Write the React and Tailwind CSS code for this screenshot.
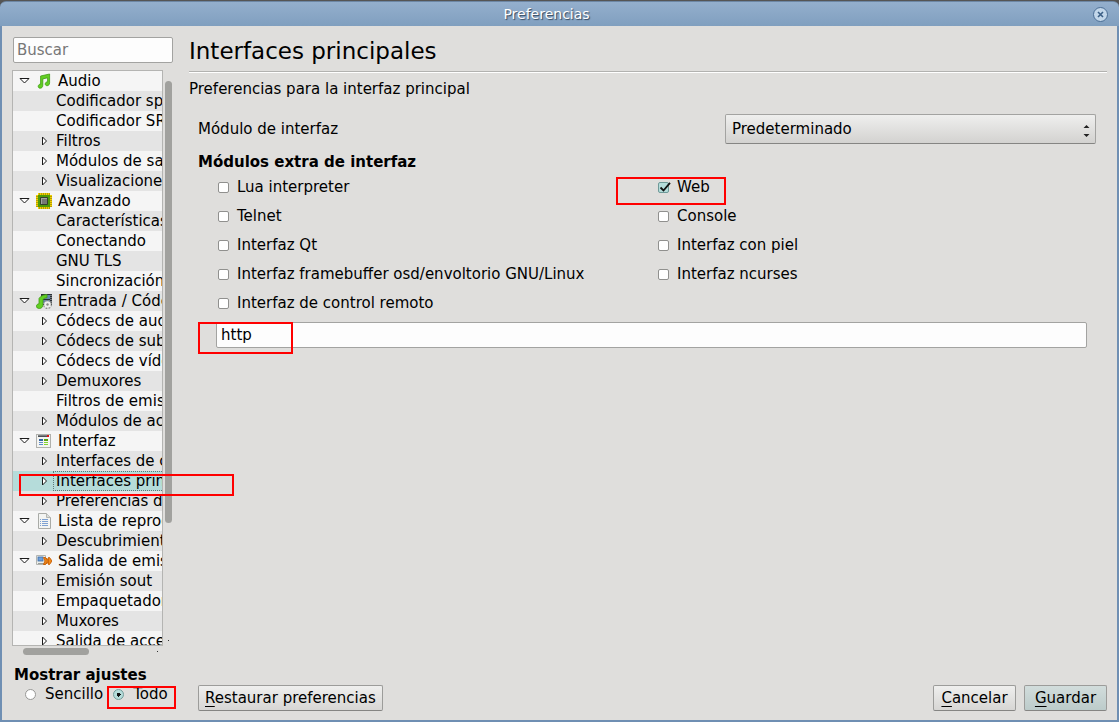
import React, { useState } from "react";

const TREE = [
  { label: "Audio", icon: "audio" },
  { label: "Codificador speex", leaf: true },
  { label: "Codificador SRT", leaf: true },
  { label: "Filtros" },
  { label: "Módulos de salida" },
  { label: "Visualizaciones" },
  { label: "Avanzado", icon: "chip" },
  { label: "Características", leaf: true },
  { label: "Conectando", leaf: true },
  { label: "GNU TLS", leaf: true },
  { label: "Sincronización", leaf: true },
  { label: "Entrada / Códecs", icon: "codecs" },
  { label: "Códecs de audio" },
  { label: "Códecs de subtítulos" },
  { label: "Códecs de vídeo" },
  { label: "Demuxores" },
  { label: "Filtros de emisión", leaf: true },
  { label: "Módulos de acceso" },
  { label: "Interfaz", icon: "window" },
  { label: "Interfaces de control" },
  { label: "Interfaces principales", selected: true },
  { label: "Preferencias de" },
  { label: "Lista de reproducción", icon: "list" },
  { label: "Descubrimiento" },
  { label: "Salida de emisión", icon: "stream" },
  { label: "Emisión sout" },
  { label: "Empaquetadores" },
  { label: "Muxores" },
  { label: "Salida de acceso" },
];

const MODULES = [
  { id: "lua", label: "Lua interpreter" },
  { id: "http", label: "Web", marked: true },
  { id: "telnet", label: "Telnet" },
  { id: "console", label: "Console" },
  { id: "qt", label: "Interfaz Qt" },
  { id: "skins", label: "Interfaz con piel" },
  { id: "fb", label: "Interfaz framebuffer osd/envoltorio GNU/Linux" },
  { id: "ncurses", label: "Interfaz ncurses" },
  { id: "rc", label: "Interfaz de control remoto" },
];

function Note() {
  return (
    <path
      d="M4.600 3 13.600 1v8.800c0 1.700-1 2.900-2.500 2.900-1.100 0-1.900-.7-1.900-1.700 0-1.200 1-2.200 2.400-2.200V4.800L6.800 5.900v6.300c0 1.800-1.100 3-2.600 3-1.200 0-2-.8-2-1.800 0-1.300 1.100-2.300 2.400-2.300z"
      fill="#62cf22"
      stroke="#3f9a14"
      strokeWidth="0.8"
    />
  );
}

function TreeIcon({ name }) {
  return (
    <svg className="h-4 w-4 shrink-0" viewBox="0 0 16 16" aria-hidden="true">
      {name === "audio" && <Note />}
      {name === "chip" && (
        <>
          <path d="M2 0h12v2h2v12h-2v2H2v-2H0V2h2z" fill="#b59a08" />
          <path
            d="M2.500 0v2M4.500 0v2M6.500 0v2M8.500 0v2M10.500 0v2M12.500 0v2M2.500 14v2M4.500 14v2M6.500 14v2M8.500 14v2M10.500 14v2M12.500 14v2M0 2.500h2M0 4.500h2M0 6.500h2M0 8.500h2M0 10.500h2M0 12.500h2M14 2.500h2M14 4.500h2M14 6.500h2M14 8.500h2M14 10.500h2M14 12.500h2"
            stroke="#f2d300"
          />
          <rect x="2" y="2" width="12" height="12" fill="#4e9a06" />
          <rect x="4" y="4" width="8" height="8" rx="1" fill="#33402c" />
          <rect x="5" y="5" width="6" height="6" fill="#a3a5a1" />
          <rect x="6" y="6" width="5" height="5" fill="#777975" />
        </>
      )}
      {name === "codecs" && (
        <>
          <rect x="5" y="1" width="11" height="11" fill="#2b3036" />
          <rect x="7" y="2" width="7" height="4" fill="#6486ab" />
          <rect x="7" y="7" width="7" height="4" fill="#6486ab" />
          <path d="M15 2v9" stroke="#c8ccd0" strokeDasharray="1 1" />
          <path
            d="M3 5.500C4.500 3 7 2 11 1.500v3.200C8.500 5 7.500 5.600 7 6.500v5c0 2.500-1.500 4-3.700 4C1.500 15.500.400 14.500.400 13.200c0-1.500 1.300-2.400 2.600-2.400z"
            fill="#62cf22"
            stroke="#3f9a14"
            strokeWidth="0.8"
          />
          <circle cx="11.500" cy="11.500" r="3.400" fill="none" stroke="#8b8d89" strokeWidth="2.200" strokeDasharray="1.600 1.070" />
          <circle cx="11.500" cy="11.500" r="3.300" fill="#eeeeec" />
          <circle cx="11.500" cy="11.500" r="1.200" fill="#888a85" />
        </>
      )}
      {name === "window" && (
        <>
          <rect x="0.500" y="1.500" width="14" height="13" fill="#f4f4f2" stroke="#b0b1ad" />
          <path d="M2 3.500h9" stroke="#4c5054" />
          <path d="M2 2.500h9" stroke="#7c8084" />
          <path d="M11 3h2" stroke="#e01010" strokeWidth="2" />
          <path d="M3 7h4" stroke="#3465a4" strokeWidth="2" />
          <path d="M3 9.500h4M3 11.500h4" stroke="#5c8bc8" />
          <path d="M8 7h4" stroke="#5aa50c" strokeWidth="2" />
          <path d="M8 9.500h4M8 11.500h4" stroke="#82d62c" />
        </>
      )}
      {name === "list" && (
        <>
          <path d="M2.500 0.500h8l4 4v11h-12z" fill="#f3f4f2" stroke="#a9aba7" />
          <path d="M10.500 0.500v4h4" fill="#dcdedb" stroke="#b5b7b3" />
          <path d="M4 6.500h1M4 8.500h1M4 10.500h1M4 12.500h1M6 6.500h6M6 8.500h6M6 10.500h6M6 12.500h6" stroke="#7ea1d2" />
        </>
      )}
      {name === "stream" && (
        <>
          <path d="M0.500 2.500h9v9h-9z" fill="#eceeea" stroke="#b3b5b1" />
          <rect x="2" y="4" width="5" height="4" fill="#6f9fd8" stroke="#3a6cab" strokeWidth="0.800" />
          <path d="M2 10.500h6" stroke="#9a9c98" />
          <path
            d="M7.500 4.500h2l2 2 1-2h1l2.500 3.500-2.500 3.500h-1l-1-2-2 2h-2L9 8z"
            fill="#f08a1c"
            stroke="#c45a00"
            strokeWidth="0.900"
          />
          <path d="M9.500 5.500 11.500 8l-2 2.500M12.500 5.500v5" fill="none" stroke="#c45a00" strokeWidth="0.700" />
        </>
      )}
    </svg>
  );
}

function TreeRow({ item, odd }) {
  const bg = item.selected ? "bg-[#b5dcda]" : odd ? "bg-[#e4e4e4]" : "bg-[#f5f5f5]";
  if (item.icon) {
    return (
      <li className={`flex h-5 items-center gap-1.5 pl-1.5 ${bg}`}>
        <svg className="h-[11px] w-[11px] shrink-0" viewBox="0 0 11 11" aria-hidden="true">
          <path d="M1 2.500h9L5.500 7z" fill="#fff" stroke="#1a1a1a" />
        </svg>
        <TreeIcon name={item.icon} />
        <span className="whitespace-nowrap">{item.label}</span>
      </li>
    );
  }
  return (
    <li className={`flex h-5 items-center pl-[29px] ${bg}`} aria-selected={item.selected}>
      <svg className="mr-[5px] h-[11px] w-1.5 shrink-0" viewBox="0 0 6 11" aria-hidden="true">
        {!item.leaf && <path d="M0.500 1v8L4.500 5z" fill="#fff" stroke="#1a1a1a" />}
      </svg>
      <span
        className={`h-5 flex-1 border pl-0.5 leading-[18px] whitespace-nowrap ${
          item.selected ? "border-dotted border-[#5c7a79]" : "border-transparent"
        }`}
      >
        {item.label}
      </span>
    </li>
  );
}

function Mark({ className }) {
  return <span className={`pointer-events-none absolute z-10 border-2 border-[#ff0000] ${className}`} />;
}

function Sidebar() {
  const [mode, setMode] = useState("all");
  const radio =
    "h-[11px] w-[11px] appearance-none rounded-full border border-[#989896] bg-white checked:border-[#6f9a98] checked:bg-[radial-gradient(circle,#111_0_2px,#b5dcda_2px)]";
  return (
    <aside className="flex w-[161px] shrink-0 flex-col pt-[11px]">
      <input
        type="text"
        aria-label="Buscar"
        placeholder="Buscar"
        className="ml-px h-[26px] shrink-0 rounded-xs border border-[#a3a3a1] bg-[#fdfdfd] px-[3px] outline-none placeholder:text-[#777]"
      />
      <div className="relative mt-[7px] mr-px flex min-h-0 flex-1 gap-0.5">
        <ul className="min-w-0 flex-1 overflow-hidden border border-[#b4b4b2] bg-[#f5f5f5] leading-5">
          {TREE.map((item, i) => (
            <TreeRow key={item.label} item={item} odd={i % 2 === 1} />
          ))}
        </ul>
        <div className="flex w-[7px] flex-col items-center justify-between pt-[11px] pb-[5px]">
          <div className="h-[79%] w-[7px] rounded-full bg-[#a1a19e]" />
          <i className="h-px w-px bg-[#333]" />
        </div>
        <Mark className="top-[404px] left-[7px] h-[22px] w-[215px]" />
      </div>
      <div className="mt-0.5 flex h-[7px] items-center justify-between pr-[15px] pl-[11px]">
        <div className="h-[7px] w-[66px] rounded-full bg-[#a1a19e]" />
        <i className="h-px w-px bg-[#333]" />
      </div>
      <fieldset className="mt-2.5 pb-4">
        <legend className="pl-0.5 leading-5 font-bold whitespace-nowrap">Mostrar ajustes</legend>
        <div className="flex items-center pl-[13px] leading-[19px]">
          <label className="flex items-center gap-[9px]">
            <input type="radio" name="mode" className={radio} checked={mode === "simple"} onChange={() => setMode("simple")} />
            Sencillo
          </label>
          <label className="relative ml-2.5 flex items-center gap-[9px]">
            <input type="radio" name="mode" className={radio} checked={mode === "all"} onChange={() => setMode("all")} />
            Todo
            <Mark className="top-px -left-1.5 h-[23px] w-[69px]" />
          </label>
        </div>
      </fieldset>
    </aside>
  );
}

function ModuleCheck({ module, checked, onToggle }) {
  return (
    <label className="relative flex items-center gap-2 justify-self-start leading-5">
      <span className="relative flex h-[11px] w-[11px]">
        <input
          type="checkbox"
          checked={checked}
          onChange={onToggle}
          className="h-[11px] w-[11px] appearance-none rounded-xs border border-[#90908e] bg-white checked:border-[#6f9a98] checked:bg-[#b5dcda]"
        />
        {checked && (
          <svg className="pointer-events-none absolute top-0 left-0 h-[11px] w-[13px]" viewBox="0 0 13 11" aria-hidden="true">
            <path d="M2.500 5.500 5.500 8.500 12 0.800" fill="none" stroke="#111" strokeWidth="1.800" />
          </svg>
        )}
      </span>
      {module.label}
      {module.marked && <Mark className="top-0 -left-[42px] h-7 w-[110px]" />}
    </label>
  );
}

function Button({ first, children, primary }) {
  return (
    <button
      type="button"
      className={`h-[26px] min-w-[83px] rounded-xs border border-[#9c9c9a] border-b-[#858583] bg-linear-to-b px-1.5 leading-[22px] ${
        primary ? "from-[#d2dddc] to-[#bccbca]" : "from-[#efefee] to-[#d7d6d4]"
      }`}
    >
      <span className="underline decoration-1 underline-offset-[3px]">{first}</span>
      {children}
    </button>
  );
}

export default function App() {
  const [active, setActive] = useState(["http"]);

  const toggle = (id) => {
    setActive((list) => (list.includes(id) ? list.filter((x) => x !== id) : [...list, id]));
  };

  return (
    <div className="flex h-screen flex-col bg-[#555] font-['DejaVu_Sans',sans-serif] text-[15px] text-black">
      <header className="mt-px flex h-[25px] shrink-0 items-center rounded-t-md border-t border-[#6d87a5] bg-linear-to-b from-[#94afcd] to-[#809fbf] pr-[11px]">
        <h1 className="flex-1 text-center text-[14px] leading-6 text-white [text-shadow:1px_1px_1px_#33485e]">Preferencias</h1>
        <button
          type="button"
          aria-label="Cerrar"
          className="flex h-[15px] w-[15px] items-center justify-center rounded-full border border-[#4a6d94] bg-[#c3d7ea]"
        >
          <svg className="h-[7px] w-[7px]" viewBox="0 0 7 7" aria-hidden="true">
            <path d="M1 1l5 5M6 1 1 6" stroke="#3b5f86" strokeWidth="1.600" />
          </svg>
        </button>
      </header>

      <div className="flex min-h-0 flex-1 gap-4 border-x-2 border-b-2 border-[#6f8fb3] bg-[#dfdedc] px-2.5">
        <Sidebar />

        <main className="flex min-w-0 flex-1 flex-col">
          <h2 className="mt-2 h-[37px] text-[23px] leading-[34px]">Interfaces principales</h2>
          <hr className="h-0.5 border-t border-b border-t-[#b2b2b0] border-b-white" />
          <p className="mt-1.5 leading-5">Preferencias para la interfaz principal</p>

          <div className="flex flex-1 flex-col pt-[15px] pr-[11px] pl-[9px]">
            <div className="flex items-center justify-between">
              <label htmlFor="module">Módulo de interfaz</label>
              <div className="relative w-[371px]">
                <select
                  id="module"
                  className="h-[30px] w-full appearance-none rounded-xs border border-[#a3a3a1] border-b-[#858583] bg-linear-to-b from-[#efefee] to-[#d3d2d0] px-1.5"
                >
                  <option>Predeterminado</option>
                </select>
                <svg className="pointer-events-none absolute right-1.5 bottom-[7px] h-3 w-[7px]" viewBox="0 0 7 12" aria-hidden="true">
                  <path d="M0.500 3 3.500 0l3 3zM0.500 9l3 3 3-3z" fill="#222" />
                </svg>
              </div>
            </div>

            <h3 className="mt-2 leading-5 font-bold">Módulos extra de interfaz</h3>
            <div className="mt-[5px] grid grid-cols-2 gap-x-0.5 gap-y-[9px] pl-5">
              {MODULES.map((m) => (
                <ModuleCheck key={m.id} module={m} checked={active.includes(m.id)} onToggle={() => toggle(m.id)} />
              ))}
            </div>

            <div className="relative mt-[9px] pr-[9px] pl-[18px]">
              <input
                type="text"
                aria-label="Módulos extra"
                value={active.join(":")}
                readOnly
                className="block h-[26px] w-full rounded-xs border border-[#a3a3a1] bg-[#fdfdfd] px-1 outline-none"
              />
              <Mark className="top-0 left-0 h-8 w-[95px]" />
            </div>
          </div>

          <footer className="flex gap-2 pb-[9px] pl-[9px]">
            <Button first="R">estaurar preferencias</Button>
            <span className="flex-1" />
            <Button first="C">ancelar</Button>
            <Button first="G" primary>
              uardar
            </Button>
          </footer>
        </main>
      </div>
    </div>
  );
}
